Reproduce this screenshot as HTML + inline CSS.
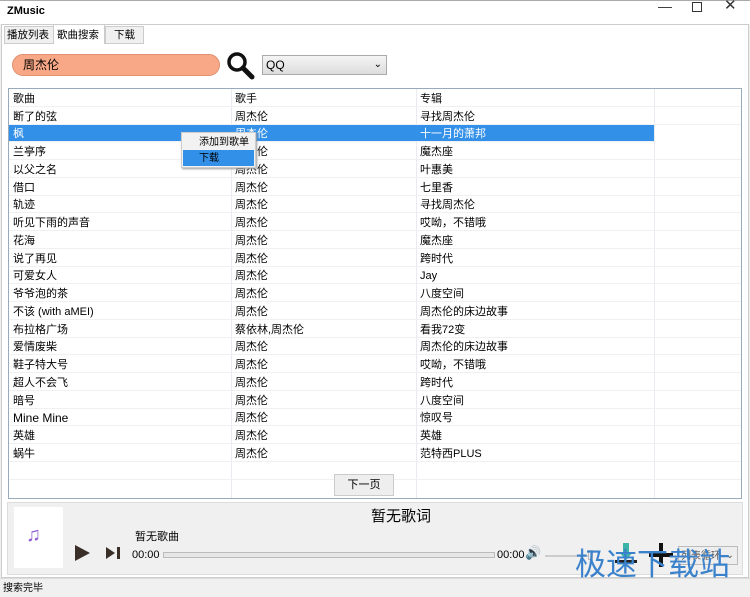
<!DOCTYPE html><html><head><meta charset="utf-8"><style>
*{margin:0;padding:0;box-sizing:border-box}
body{width:750px;height:597px;background:#f0f0f0;font-family:"Liberation Sans","Noto Sans CJK SC",sans-serif;font-size:11px;line-height:13px;color:#000;position:relative;overflow:hidden}
.a{position:absolute;white-space:nowrap}
.row{position:absolute;left:9px;width:732px;height:17.75px;border-bottom:1px solid #eef0f3}
.c{position:absolute;top:3.5px;white-space:nowrap;line-height:13px}
</style></head><body>
<div class="a" style="left:0;top:0;width:750px;height:24px;background:#fff;border-top:1px solid #aaa"></div>
<div class="a" style="left:7px;top:5px;font-weight:bold;font-size:11px">ZMusic</div>
<div class="a" style="left:658px;top:0;font-size:14px;color:#333">&#8212;</div>
<div class="a" style="left:692px;top:2px;width:10px;height:10px;border:1px solid #333"></div>
<div class="a" style="left:724px;top:-1px;font-size:15px;color:#333">&#10005;</div>
<div class="a" style="left:1px;top:24px;width:748px;height:554px;background:#fff;border:1px solid #ccc"></div>
<div class="a" style="left:4px;top:26px;width:50px;height:18px;background:#f0f0f0;border:1px solid #ccc;padding:2px 2px;font-size:10.5px">播放列表</div>
<div class="a" style="left:53px;top:24px;width:52px;height:20px;background:#fff;border:1px solid #ccc;border-bottom:none;padding:4px 3px;font-size:10.5px">歌曲搜索</div>
<div class="a" style="left:105px;top:26px;width:39px;height:18px;background:#f0f0f0;border:1px solid #ccc;padding:2px 8px;font-size:10.5px">下载</div>
<div class="a" style="left:12px;top:54px;width:208px;height:22px;background:#f8a886;border:1px solid #e09070;border-radius:11px;padding:4px 10px;font-size:12px">周杰伦</div>
<svg class="a" style="left:225px;top:50px" width="32" height="30"><circle cx="12" cy="12" r="8" fill="none" stroke="#111" stroke-width="3.5"/><line x1="18" y1="18" x2="27" y2="27" stroke="#111" stroke-width="5" stroke-linecap="round"/></svg>
<div class="a" style="left:262px;top:55px;width:125px;height:20px;border:1px solid #aaa;background:linear-gradient(#f4f4f4,#ddd);padding:3px 3px;font-size:12px">QQ<span style="position:absolute;right:4px;top:2px;font-size:10px">&#8964;</span></div>
<div class="a" style="left:8px;top:88px;width:734px;height:411px;background:#fff;border:1px solid #9ab"></div>
<div class="a" style="left:231px;top:89px;width:1px;height:409px;background:#e8ebef"></div>
<div class="a" style="left:416px;top:89px;width:1px;height:409px;background:#e8ebef"></div>
<div class="a" style="left:654px;top:89px;width:1px;height:409px;background:#e8ebef"></div>
<div class="row" style="top:89px"><span class="c" style="left:4px">歌曲</span><span class="c" style="left:226px">歌手</span><span class="c" style="left:411px">专辑</span></div>
<div class="row" style="top:107px"><span class="c" style="left:4px">断了的弦</span><span class="c" style="left:226px">周杰伦</span><span class="c" style="left:411px">寻找周杰伦</span></div>
<div class="row" style="top:124.7px;width:645px;background:#3390e8;color:#fff"><span class="c" style="left:4px">枫</span><span class="c" style="left:226px">周杰伦</span><span class="c" style="left:411px">十一月的萧邦</span></div>
<div class="row" style="top:142.5px"><span class="c" style="left:4px">兰亭序</span><span class="c" style="left:226px">周杰伦</span><span class="c" style="left:411px">魔杰座</span></div>
<div class="row" style="top:160.2px"><span class="c" style="left:4px">以父之名</span><span class="c" style="left:226px">周杰伦</span><span class="c" style="left:411px">叶惠美</span></div>
<div class="row" style="top:178px"><span class="c" style="left:4px">借口</span><span class="c" style="left:226px">周杰伦</span><span class="c" style="left:411px">七里香</span></div>
<div class="row" style="top:195.7px"><span class="c" style="left:4px">轨迹</span><span class="c" style="left:226px">周杰伦</span><span class="c" style="left:411px">寻找周杰伦</span></div>
<div class="row" style="top:213.5px"><span class="c" style="left:4px">听见下雨的声音</span><span class="c" style="left:226px">周杰伦</span><span class="c" style="left:411px">哎呦，不错哦</span></div>
<div class="row" style="top:231.2px"><span class="c" style="left:4px">花海</span><span class="c" style="left:226px">周杰伦</span><span class="c" style="left:411px">魔杰座</span></div>
<div class="row" style="top:249px"><span class="c" style="left:4px">说了再见</span><span class="c" style="left:226px">周杰伦</span><span class="c" style="left:411px">跨时代</span></div>
<div class="row" style="top:266.7px"><span class="c" style="left:4px">可爱女人</span><span class="c" style="left:226px">周杰伦</span><span class="c" style="left:411px">Jay</span></div>
<div class="row" style="top:284.5px"><span class="c" style="left:4px">爷爷泡的茶</span><span class="c" style="left:226px">周杰伦</span><span class="c" style="left:411px">八度空间</span></div>
<div class="row" style="top:302.2px"><span class="c" style="left:4px">不该 (with aMEI)</span><span class="c" style="left:226px">周杰伦</span><span class="c" style="left:411px">周杰伦的床边故事</span></div>
<div class="row" style="top:320px"><span class="c" style="left:4px">布拉格广场</span><span class="c" style="left:226px">蔡依林,周杰伦</span><span class="c" style="left:411px">看我72变</span></div>
<div class="row" style="top:337.7px"><span class="c" style="left:4px">爱情废柴</span><span class="c" style="left:226px">周杰伦</span><span class="c" style="left:411px">周杰伦的床边故事</span></div>
<div class="row" style="top:355.5px"><span class="c" style="left:4px">鞋子特大号</span><span class="c" style="left:226px">周杰伦</span><span class="c" style="left:411px">哎呦，不错哦</span></div>
<div class="row" style="top:373.2px"><span class="c" style="left:4px">超人不会飞</span><span class="c" style="left:226px">周杰伦</span><span class="c" style="left:411px">跨时代</span></div>
<div class="row" style="top:391px"><span class="c" style="left:4px">暗号</span><span class="c" style="left:226px">周杰伦</span><span class="c" style="left:411px">八度空间</span></div>
<div class="row" style="top:408.7px"><span class="c" style="left:4px;font-size:12px">Mine Mine</span><span class="c" style="left:226px">周杰伦</span><span class="c" style="left:411px">惊叹号</span></div>
<div class="row" style="top:426.5px"><span class="c" style="left:4px">英雄</span><span class="c" style="left:226px">周杰伦</span><span class="c" style="left:411px">英雄</span></div>
<div class="row" style="top:444.2px"><span class="c" style="left:4px">蜗牛</span><span class="c" style="left:226px">周杰伦</span><span class="c" style="left:411px">范特西PLUS</span></div>
<div class="row" style="top:462px"></div>
<div class="a" style="left:181px;top:132px;width:75px;height:36px;background:#f2f2f2;border:1px solid #ccc;box-shadow:1px 1px 2px #999"></div>
<div class="a" style="left:199px;top:136px;font-size:10px">添加到歌单</div>
<div class="a" style="left:183px;top:150px;width:71px;height:16px;background:#3390e8"></div>
<div class="a" style="left:199px;top:152px;font-size:10px">下载</div>
<div class="a" style="left:334px;top:474px;width:60px;height:22px;background:#eee;border:1px solid #ccc;text-align:center;padding-top:4px">下一页</div>
<div class="a" style="left:7px;top:502px;width:736px;height:73px;background:#f0f0f0;border:1px solid #ddd"></div>
<div class="a" style="left:14px;top:507px;width:49px;height:61px;background:#fff"></div>
<div class="a" style="left:26px;top:524px;font-size:20px;line-height:22px;color:#9060d0">&#9835;</div>
<div class="a" style="left:371px;top:508px;font-size:15px;line-height:18px">暂无歌词</div>
<div class="a" style="left:135px;top:531px">暂无歌曲</div>
<svg class="a" style="left:74px;top:544px" width="52" height="18"><path d="M1 1L16 9L1 17Z" fill="#3a2e28"/><path d="M32 3L41 9L32 15Z" fill="#3a2e28"/><rect x="43" y="3" width="3" height="12" fill="#3a2e28"/></svg>
<div class="a" style="left:132px;top:549px">00:00</div>
<div class="a" style="left:163px;top:552px;width:332px;height:6px;border:1px solid #bbb;background:#e6e6e6"></div>
<div class="a" style="left:497px;top:549px">00:00</div>
<div class="a" style="left:525px;top:546px;font-size:13px;line-height:14px">&#128266;</div>
<div class="a" style="left:545px;top:555px;width:45px;height:2px;background:#ccc"></div>
<div class="a" style="left:588px;top:550px;width:5px;height:10px;border:1px solid #bbb;background:#eee"></div>
<svg class="a" style="left:612px;top:542px" width="64" height="26"><rect x="11" y="1" width="6" height="10" fill="#3bb5a5"/><path d="M7 10h14l-7 8z" fill="#3bb5a5"/><rect x="3" y="18" width="22" height="3" fill="#222"/><rect x="47" y="1" width="4" height="24" fill="#111"/><rect x="37" y="11" width="24" height="4" fill="#111"/></svg>
<div class="a" style="left:678px;top:546px;width:60px;height:19px;background:#eee;border:1px solid #bbb;font-size:10px;padding:3px 2px;color:#555">列表循环<span style="position:absolute;right:3px;top:2px">&#8964;</span></div>
<div class="a" style="left:575px;top:545px;font-size:31px;line-height:40px;color:#3b82cc">极速下载站</div>
<div class="a" style="left:0;top:578px;width:750px;height:19px;background:#f0f0f0;border-top:1px solid #ddd"></div>
<div class="a" style="left:3px;top:582px;font-size:10px">搜索完毕</div>
</body></html>
